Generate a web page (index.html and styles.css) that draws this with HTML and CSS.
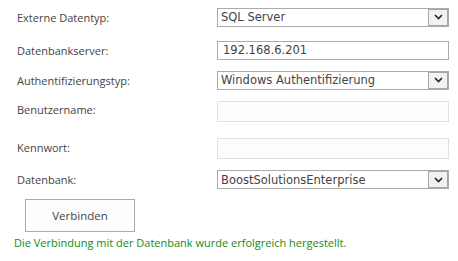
FILE: index.html
```html
<!DOCTYPE html>
<html lang="de">
<head>
    <meta charset="UTF-8">
    <title>Datenverbindung</title>
    <link rel="stylesheet" href="styles.css">
</head>
<body>
    <div class="form">
        <label class="label">Externe Datentyp:</label>
        <div class="select">
            <span class="value">SQL Server</span>
            <span class="arrow"><svg width="9" height="6" viewBox="0 0 9 6"><path d="M1 1 L4.5 4.5 L8 1" fill="none" stroke="#222" stroke-width="1.6"/></svg></span>
        </div>

        <label class="label">Datenbankserver:</label>
        <div class="input"><span class="value">192.168.6.201</span></div>

        <label class="label">Authentifizierungstyp:</label>
        <div class="select">
            <span class="value">Windows Authentifizierung</span>
            <span class="arrow"><svg width="9" height="6" viewBox="0 0 9 6"><path d="M1 1 L4.5 4.5 L8 1" fill="none" stroke="#222" stroke-width="1.6"/></svg></span>
        </div>

        <label class="label raised">Benutzername:</label>
        <div class="input disabled"></div>

        <label class="label raised">Kennwort:</label>
        <div class="input disabled"></div>

        <label class="label">Datenbank:</label>
        <div class="select">
            <span class="value">BoostSolutionsEnterprise</span>
            <span class="arrow"><svg width="9" height="6" viewBox="0 0 9 6"><path d="M1 1 L4.5 4.5 L8 1" fill="none" stroke="#222" stroke-width="1.6"/></svg></span>
        </div>
    </div>
    <button class="connect">Verbinden</button>
    <p class="success">Die Verbindung mit der Datenbank wurde erfolgreich hergestellt.</p>
</body>
</html>
```

FILE: styles.css
```css
* {
    margin: 0;
    padding: 0;
    box-sizing: border-box;
}

body {
    background: #fff;
    font-family: 'Open Sans', sans-serif;
    color: #444;
}

.form {
    display: grid;
    grid-template-columns: 200px 232px;
    grid-template-rows: 32px 34px 26px 36px 39px 23px;
    align-items: center;
    padding: 1px 0 0 17px;
}

.label {
    font-size: 11px;
    color: #444;
}

.label.raised {
    margin-top: -3px;
}

.select,
.input {
    height: 19px;
    border: 1px solid #ababab;
    display: flex;
    align-items: center;
    font-family: 'DejaVu Sans', Verdana, sans-serif;
    font-size: 11.5px;
    color: #444;
    background: #fff;
}

.select .value {
    flex: 1;
    padding-left: 3px;
}

.input .value {
    padding-left: 5px;
}

.input.disabled {
    height: 21px;
    border-color: #e1e1e1;
    background: #fdfdfd;
}

.arrow {
    width: 20px;
    height: 17px;
    border: 1px solid #a6a6a6;
    background: #f2f2f2;
    display: flex;
    align-items: center;
    justify-content: center;
}

.connect {
    display: block;
    width: 110px;
    height: 33px;
    margin: 8px 0 0 25px;
    border: 1px solid #ababab;
    background: #fdfdfd;
    font-family: 'Open Sans', sans-serif;
    font-size: 11.5px;
    color: #444;
}

.success {
    margin: 3px 0 0 14px;
    font-size: 11px;
    color: #138b13;
}
```
